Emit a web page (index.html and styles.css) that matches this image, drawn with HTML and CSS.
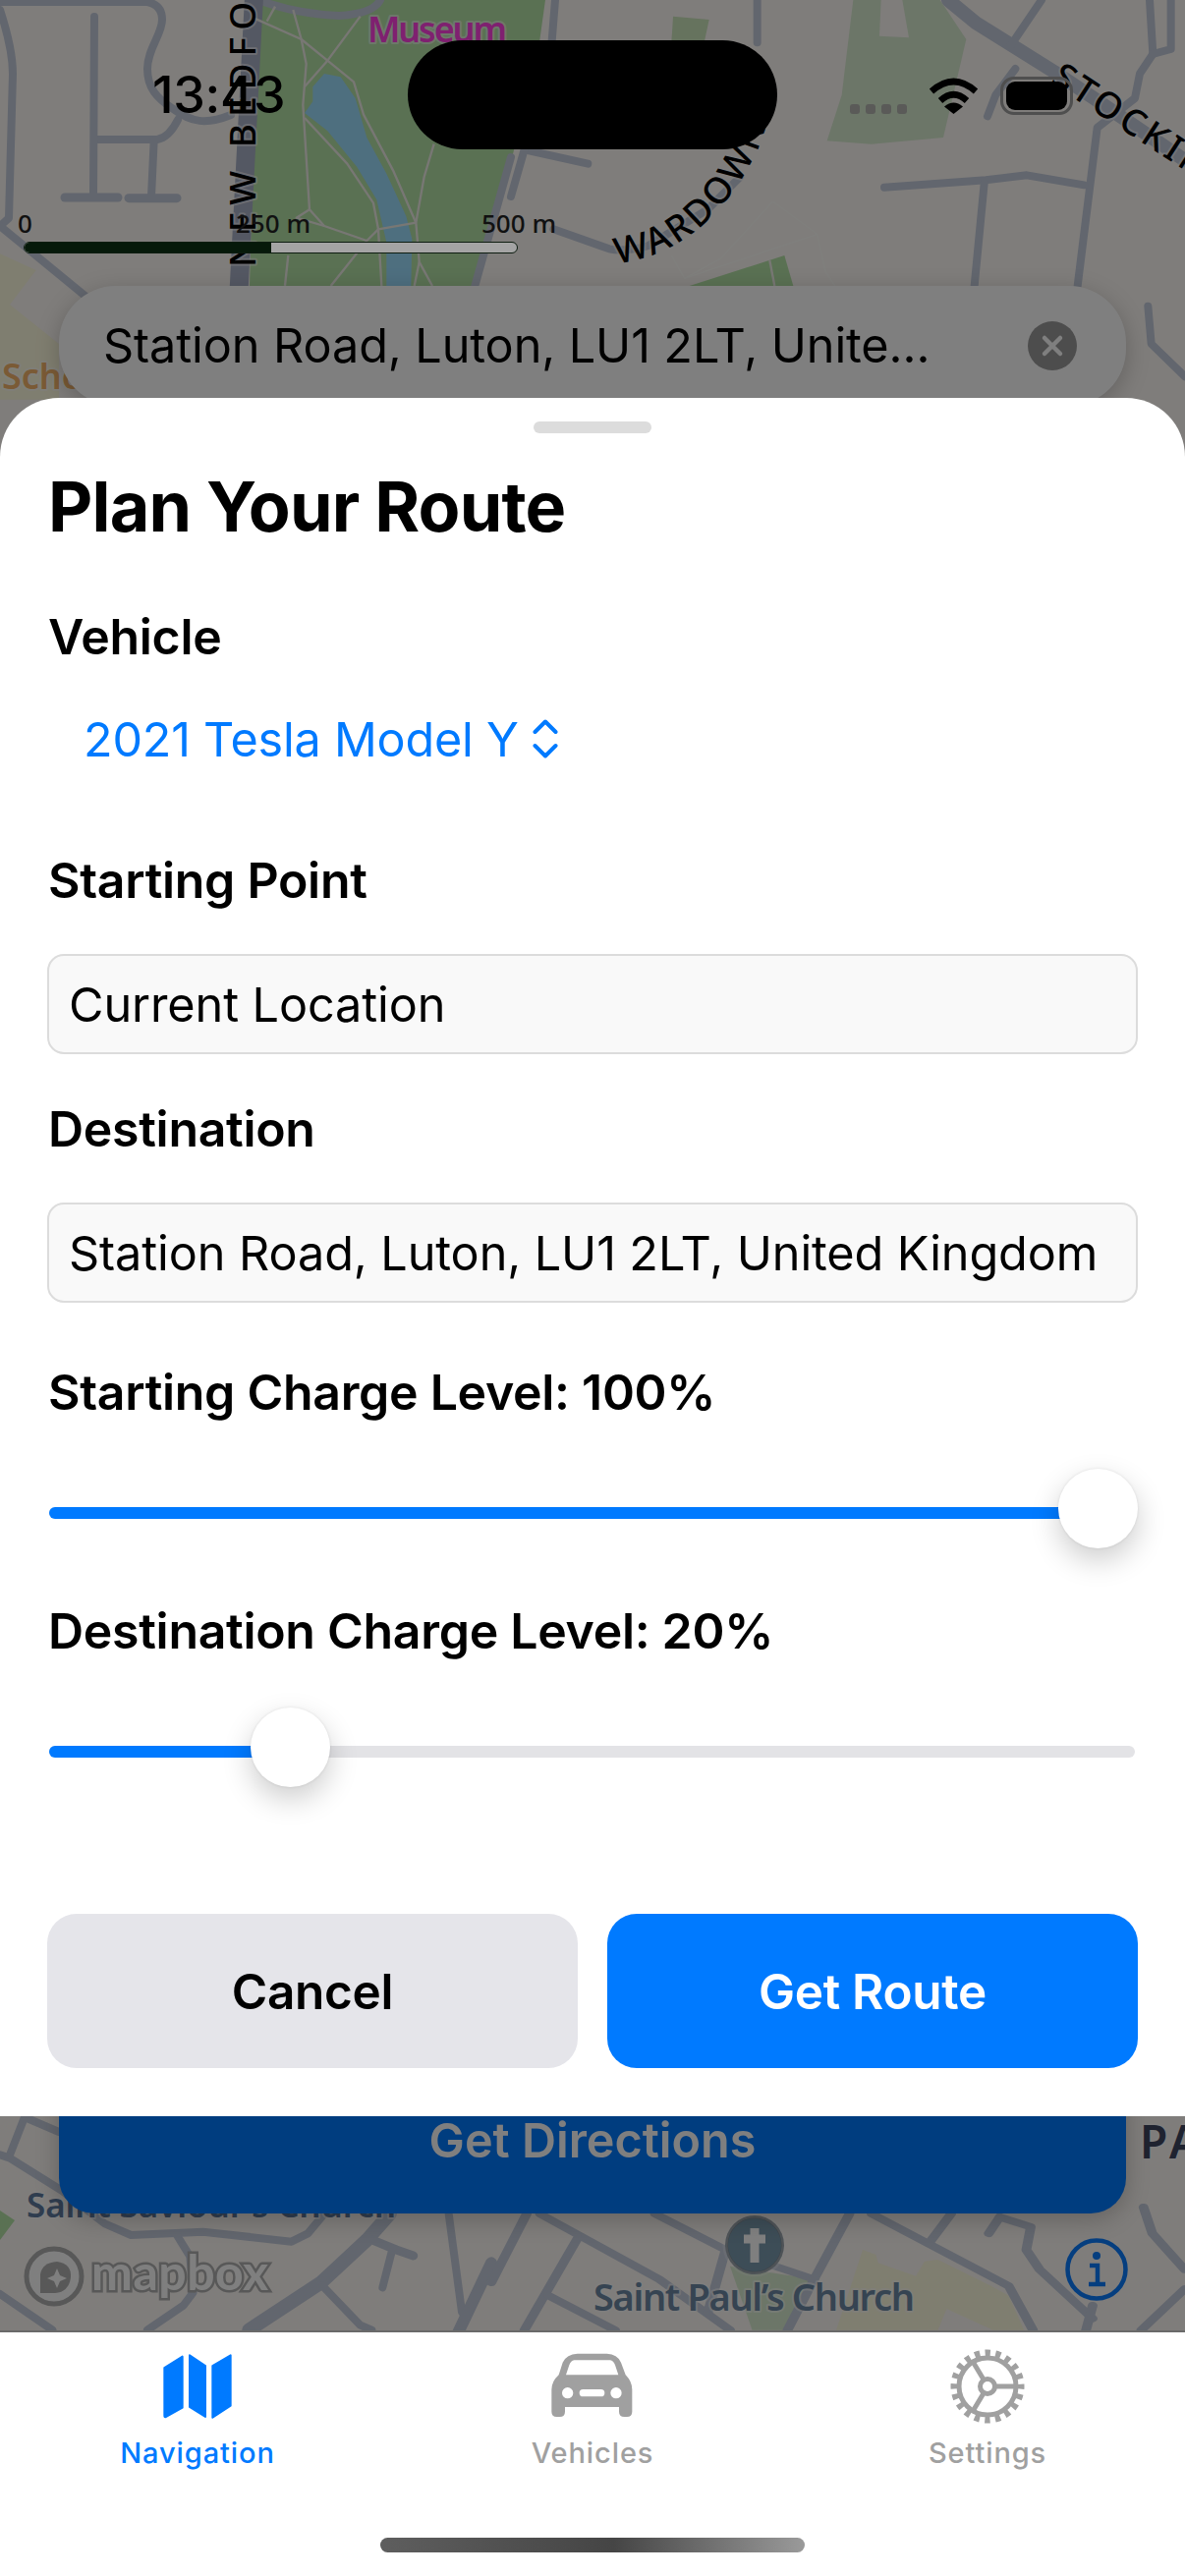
FILE: index.html
```html
<!DOCTYPE html>
<html lang="en">
<head>
<meta charset="utf-8">
<title>Plan Your Route</title>
<link rel="stylesheet" href="styles.css">
</head>
<body>
<div class="screen">
  <div class="map-area">
    <svg class="map" viewBox="0 0 1206 2372" width="1206" height="2372" xmlns="http://www.w3.org/2000/svg">
      <rect width="1206" height="2372" fill="#fefaf6"/>
      <!-- top left: zoom-space coordinates -->
      <g transform="scale(.33333)">
        <polygon points="0,775 110,825 30,930 180,1050 180,1220 0,1220" fill="#fffce0"/>
        <polygon points="786,0 1665,0 1644,150 1560,495 1440,873 762,873" fill="#b4e2a6"/>
        <g class="road" stroke-width="24">
          <path d="M0 6H450Q495 15 495 60C495 105 450 150 450 210C450 270 480 300 525 330C585 375 630 381 705 351"/>
          <path d="M543 366Q516 420 480 426H290"/>
          <path d="M288 51L285 600"/>
          <path d="M470 430L462 600"/>
          <path d="M198 603H360" stroke-width="27"/>
          <path d="M393 605H540" stroke-width="27"/>
          <path d="M0 30Q39 150 39 225L27 666L0 690"/>
          <path d="M0 690L280 920"/>
          <path d="M790 0Q900 42 1035 48Q1140 42 1161 0"/>
          <path d="M1450 873L1560 480"/>
        </g>
        <path d="M730 873L775 0" class="road" stroke="#a8b0c6" stroke-width="57"/>
        <polygon points="930,345 955,310 955,265 990,225 1040,235 1085,300 1120,420 1180,530 1240,660 1258,730 1255,873 1180,873 1180,740 1150,610 1090,510 1000,400" fill="#9cdeff"/>
        <g class="path-line">
          <path d="M775 55L920 120L1000 185L1080 250L1110 350L1200 520L1270 680L1280 800L1320 873"/>
          <path d="M895 30L920 120L935 195L925 320L945 640L990 690L1120 735"/>
          <path d="M1100 50L1000 185L930 265"/>
          <path d="M930 360L1060 500L1140 620L1155 700L1165 873"/>
          <path d="M945 640L905 665L990 690"/>
          <path d="M1155 700L1270 680"/>
          <path d="M1155 700L1120 735L1010 873"/>
          <path d="M880 780L870 873"/>
          <path d="M1325 440L1295 540L1270 680"/>
          <path d="M1280 800L1265 873"/>
          <path d="M840 20L815 65"/>
        </g>
      </g>
      <!-- top centre -->
      <g transform="translate(520 0) scale(.33333)">
        <polygon points="1045,0 1310,0 1390,120 1320,420 1100,440 965,430 1010,290" fill="#d8ecd0"/>
        <polygon points="1130,0 1195,0 1215,115 1125,110" fill="#fefaf6"/>
        <polygon points="495,50 605,60 590,130 490,130" fill="#cce6bc"/>
        <polygon points="545,873 835,780 862,873" fill="#b4e2a6"/>
        <path d="M790 795L805 873" class="path-line"/>
        <g class="faint-line">
          <path d="M800 615L935 715L960 830L990 873"/>
          <path d="M935 715L530 850"/>
          <path d="M800 615L640 790L530 850L490 780"/>
        </g>
        <g class="road" stroke-width="24">
          <path d="M130 700L300 760Q350 770 420 750L600 640L700 540"/>
          <path d="M55 460L235 500"/>
          <path d="M40 460L0 600"/>
          <path d="M752 0V130"/>
          <path d="M135 0L125 125"/>
        </g>
      </g>
      <!-- top right -->
      <g transform="translate(900 0) scale(.33333)">
        <g class="road" stroke-width="24">
          <path d="M195 0L280 70L520 220L640 300L918 490" stroke-width="42"/>
          <path d="M480 0L385 140"/>
          <path d="M400 210L340 290L315 355"/>
          <path d="M810 0L820 165L780 225L765 300L650 390L590 873"/>
          <path d="M875 0V150L820 165"/>
          <path d="M0 572L310 550L435 535L610 565"/>
          <path d="M305 560L275 873"/>
          <path d="M805 935L815 1050L918 1150"/>
        </g>
      </g>
      <text class="label road-name" transform="translate(260 272) rotate(-90)" letter-spacing="7">NEW BEDFORD</text>
      <text class="label road-name" transform="translate(1068 84) rotate(33)" font-size="30" letter-spacing="4">STOCKING</text>
      <path id="wardown" d="M628 268C680 262 735 230 772 150L790 100" fill="none"/>
      <text class="label road-name" font-size="29" letter-spacing="3"><textPath href="#wardown">WARDOWN</textPath></text>
      <text class="label" x="374" y="43" font-size="36" fill="#ff40e0" textLength="142">Museum</text>
      <text class="label" x="2" y="396" font-size="36" fill="#f4b46a">School</text>

      <!-- bottom left -->
      <g transform="translate(0 2150) scale(.33333)">
        <polygon points="0,300 45,330 0,390" fill="#b4e2a6"/>
        <g class="road" stroke-width="24">
          <path d="M30 130L75 15L180 60"/>
          <path d="M0 130L30 140L190 240L320 340L400 375L620 365L890 395L940 370L990 310"/>
          <path d="M540 375L580 440L590 550L560 590L450 665"/>
          <path d="M0 555L160 665"/>
          <path d="M760 665L980 520L1120 390L1190 310" stroke-width="42"/>
          <path d="M1125 385L1210 420L1262 438" stroke-width="27"/>
          <path d="M1195 430L1168 535" stroke-width="24"/>
          <path d="M985 530L1100 650L1135 665"/>
          <path d="M1370 310L1410 610L1425 625"/>
          <path d="M1400 670L1500 460" stroke-width="36"/>
        </g>
      </g>
      <text class="label" x="27" y="2257" font-size="35" fill="#5e7a9e" textLength="376">Saint Saviour’s Church</text>
      <!-- bottom right -->
      <g transform="translate(500 2150) scale(.45 .33333)">
        <polygon points="540,470 730,510 680,665 590,665" fill="#d8ecd0"/>
        <polygon points="840,420 870,435 875,460 960,500 980,455 1010,450 1130,530 1170,560 1205,665 780,665" fill="#fffce0"/>
        <polygon points="1030,600 1135,665 1010,665" fill="#fefaf6"/>
        <g class="road" stroke-width="22">
          <path d="M80 310L0 520"/>
          <path d="M110 310L380 510L540 665"/>
          <path d="M195 385L75 665"/>
          <path d="M130 560L280 665"/>
          <path d="M370 310L530 420L730 510"/>
          <path d="M810 310L730 510L670 665"/>
          <path d="M530 420L490 610"/>
          <path d="M860 310L1170 530L1225 665"/>
          <path d="M1040 310L990 400"/>
          <path d="M1150 320L1220 350L1210 420L1240 480L1360 630"/>
          <path d="M1150 320L1125 370"/>
          <path d="M1475 290L1495 370L1568 480"/>
          <path d="M1568 540L1470 665"/>
          <path d="M1360 590L1345 665"/>
        </g>
      </g>
      <text class="label" x="1160" y="2197" font-size="46" fill="#3e4660" letter-spacing="4">PA</text>
      <circle cx="768" cy="2285" r="30" fill="#7c8a94" stroke="#fff" stroke-opacity=".25" stroke-width="5"/>
      <circle cx="768" cy="2285" r="27" fill="#7a9aae"/>
      <path d="M768 2268V2303M757 2279H779" stroke="#ffffff" stroke-width="9"/>
      <text class="label" x="604" y="2352" font-size="38" fill="#6c88a4" textLength="327">Saint Paul’s Church</text>
    </svg>

    <div class="search-bar">
      <span class="search-text">Station Road, Luton, LU1 2LT, Unite...</span>
      <span class="search-clear">
        <svg viewBox="0 0 50 50" width="50" height="50"><path d="M17 17L33 33M33 17L17 33" stroke="#fff" stroke-width="4.5" stroke-linecap="round"/></svg>
      </span>
    </div>
    <div class="directions-btn">Get Directions</div>

    <div class="mapbox-logo">
      <svg viewBox="0 0 62 64" width="62" height="64"><circle cx="31" cy="32" r="28" fill="#fff" stroke="#b0b0b0" stroke-width="5"/><path d="M17 49V30Q19 18 34 17Q49 19 48 33Q46 48 32 49Z" fill="#b0b0b0"/><path d="M34 24L37 31L44 34L37 37L34 44L31 37L24 34L31 31Z" fill="#fff"/></svg>
      <span class="mapbox-word">mapbox</span>
    </div>
    <svg class="info-btn" viewBox="0 0 66 66" width="66" height="66"><circle cx="33" cy="33" r="29.5" fill="none" stroke="#0a7cff" stroke-width="4.5"/><circle cx="33" cy="19" r="4" fill="#0a7cff"/><path d="M26 29H34V48M25 48H42" fill="none" stroke="#0a7cff" stroke-width="4.5"/></svg>

    <div class="dim"></div>

    <div class="status-bar">
      <span class="time">13:43</span>
      <div class="island"></div>
      <div class="status-dots"><i></i><i></i><i></i><i></i></div>
      <svg class="wifi" viewBox="0 0 51 37" width="51" height="37"><path d="M3 14Q25.500 -6 48 14" fill="none" stroke="#000" stroke-width="6.500"/><path d="M12 23.500Q25.500 11 39 23.500" fill="none" stroke="#000" stroke-width="6.500"/><path d="M25.500 37L16 29.500Q25.500 21.500 35 29.500Z"/></svg>
      <div class="battery"><div class="battery-level"></div></div>
    </div>

    <div class="scale">
      <div class="scale-labels"><span>0</span><span>250 m</span><span>500 m</span></div>
      <div class="scale-bar"><div class="scale-fill"></div></div>
    </div>

    <section class="sheet">
      <div class="grabber"></div>
      <h1 class="sheet-title">Plan Your Route</h1>
      <h2 class="field-label vehicle-label">Vehicle</h2>
      <div class="picker">
        <span>2021 Tesla Model Y</span>
        <svg viewBox="0 0 26 40" width="26" height="40"><path d="M2.500 13L13 2.500L23.500 13M2.500 27L13 37.500L23.500 27" fill="none" stroke="#007aff" stroke-width="4" stroke-linecap="round" stroke-linejoin="round"/></svg>
      </div>
      <h2 class="field-label start-label">Starting Point</h2>
      <div class="text-input">Current Location</div>
      <h2 class="field-label dest-label">Destination</h2>
      <div class="text-input">Station Road, Luton, LU1 2LT, United Kingdom</div>
      <h2 class="field-label charge-start">Starting Charge Level: 100%</h2>
      <div class="slider">
        <div class="slider-fill" style="width:1066px"></div>
        <div class="slider-thumb" style="left:1027px"></div>
      </div>
      <h2 class="field-label charge-dest">Destination Charge Level: 20%</h2>
      <div class="slider">
        <div class="slider-fill" style="width:245px"></div>
        <div class="slider-thumb" style="left:205px"></div>
      </div>
      <div class="actions">
        <button class="btn btn-cancel">Cancel</button>
        <button class="btn btn-primary">Get Route</button>
      </div>
    </section>
  </div>

  <nav class="tabbar">
    <div class="tab active">
      <div class="tab-icon"><svg viewBox="0 0 210 198" width="70" height="66"><path d="M4 42L59 8V164L8 192Q4 194 4 188ZM81 4L129 36V192L81 162ZM151 36L206 4V158L151 194Z" fill="#007aff" stroke="#007aff" stroke-width="6" stroke-linejoin="round"/></svg></div>
      <span>Navigation</span>
    </div>
    <div class="tab">
      <div class="tab-icon"><svg viewBox="0 0 345 270" width="115" height="90"><path fill-rule="evenodd" fill="#a0a0a0" d="M125 35H215Q247 36 258 62L272 100Q292 120 292 145V212Q292 228 276 228H268Q252 228 252 212V198H87V212Q87 228 71 228H62Q46 228 46 212V145Q46 120 68 100L80 62Q92 36 125 35ZM115 55Q105 56 100 70L90 100H250L240 70Q235 56 225 55ZM95 138A17 17 0 1 0 95 172A17 17 0 1 0 95 138ZM243 138A17 17 0 1 0 243 172A17 17 0 1 0 243 138ZM142 144Q131 144 131 155Q131 166 142 166H197Q208 166 208 155Q208 144 197 144Z"/></svg></div>
      <span>Vehicles</span>
    </div>
    <div class="tab">
      <div class="tab-icon"><svg viewBox="0 0 80 80" width="80" height="80"><circle cx="40" cy="40" r="34" fill="none" stroke="#a0a0a0" stroke-width="7" stroke-dasharray="5.340 5.340" stroke-dashoffset="2.670"/><circle cx="40" cy="40" r="29" fill="none" stroke="#a0a0a0" stroke-width="5"/><circle cx="40" cy="40" r="7.500" fill="none" stroke="#a0a0a0" stroke-width="5"/><path d="M48 40H70M36 33L24 13M36 47L24 67" stroke="#a0a0a0" stroke-width="5"/></svg></div>
      <span>Settings</span>
    </div>
  </nav>
  <div class="home-indicator"></div>
</div>
</body>
</html>
```

FILE: styles.css
```css
* { box-sizing: border-box; }
html, body { margin: 0; padding: 0; background: #fff; }
body { font-family: Inter, "Noto Sans", "Liberation Sans", sans-serif; color: #000; }

.screen { position: relative; width: 1206px; height: 2622px; overflow: hidden; display: flex; flex-direction: column; background: #fff; }
.map-area { position: relative; height: 2372px; flex: none; overflow: hidden; }
.map { position: absolute; inset: 0; display: block; }
.dim { position: absolute; inset: 0; background: rgba(0,0,0,.5); }

/* map drawing */
.road path, path.road { fill: none; stroke: #c4ccdc; stroke-linecap: round; stroke-linejoin: round; }
path.road { stroke: #a8b0c6; }
.road { fill: none; }
.path-line, .path-line path { fill: none; stroke: #f0efe8; stroke-width: 7; stroke-linejoin: round; }
.faint-line path { fill: none; stroke: #fffffa; stroke-width: 4; }
.label { font-family: "Noto Sans", Inter, sans-serif; font-weight: 600; paint-order: stroke; stroke: #ffffff; stroke-opacity: .55; stroke-width: 4px; stroke-linejoin: round; }
.road-name { font-size: 37px; font-weight: 500; fill: #000; }

/* floating map controls (under the dim) */
.search-bar { position: absolute; left: 60px; top: 291px; width: 1086px; height: 122px; border-radius: 58px; background: #fff; box-shadow: 0 6px 24px rgba(0,0,0,.22); display: flex; align-items: center; justify-content: space-between; padding: 0 50px 0 45px; }
.search-text { font-size: 48.6px; letter-spacing: -.1px; white-space: nowrap; position: relative; top: -1px; }
.search-clear { width: 50px; height: 50px; border-radius: 50%; background: #9a9a9a; display: flex; }
.directions-btn { position: absolute; left: 60px; top: 2103px; width: 1086px; height: 150px; border-radius: 36px; background: #007aff; color: #fff; font-size: 48.5px; font-weight: 600; text-align: center; padding-top: 46px; box-shadow: 0 6px 24px rgba(0,0,0,.22); }
.mapbox-logo { position: absolute; left: 24px; top: 2285px; display: flex; align-items: center; gap: 7px; }
.mapbox-word { font-family: Lato, Inter, sans-serif; font-weight: 700; font-size: 50px; line-height: 60px; color: #fff; -webkit-text-stroke: 5px #b0b0b0; paint-order: stroke; letter-spacing: .5px; position: relative; top: -5px; }
.info-btn { position: absolute; left: 1083px; top: 2277px; }

/* status bar */
.status-bar { position: absolute; left: 0; top: 0; width: 100%; height: 160px; }
.time { position: absolute; left: 155px; top: 68px; font-size: 52px; line-height: 58px; font-weight: 500; letter-spacing: -.3px; }
.island { position: absolute; left: 415px; top: 41px; width: 376px; height: 111px; border-radius: 56px; background: #000; }
.status-dots { position: absolute; left: 865px; top: 106px; display: flex; gap: 6px; }
.status-dots i { display: block; width: 10px; height: 10px; border-radius: 3px; background: #5a5a58; }
.wifi { position: absolute; left: 945px; top: 79px; }
.battery { position: absolute; left: 1018px; top: 78px; width: 74px; height: 39px; border: 3px solid #4f4f4f; border-radius: 14px; padding: 2px 3px; }
.battery-level { width: 100%; height: 100%; border-radius: 9px; background: #000; }

/* scale */
.scale { position: absolute; left: 24px; top: 213px; width: 503px; }
.scale-labels { height: 33px; font-family: "Noto Sans", Inter, sans-serif; font-size: 26px; line-height: 28px; font-weight: 500; color: #111; display: flex; margin-left: -6px; white-space: nowrap; }
.scale-labels span { flex: none; }
.scale-labels span:nth-child(1) { width: 222px; }
.scale-labels span:nth-child(2) { width: 250px; }
.scale-bar { height: 12px; border: 1px solid #0d1c10; border-radius: 6px; background: #a4a4a4; overflow: hidden; }
.scale-fill { width: 50%; height: 100%; background: #06190a; }

/* sheet */
.sheet { position: absolute; left: 0; right: 0; top: 405px; height: 1749px; background: #fff; border-radius: 60px 60px 0 0; padding: 24px 48px 0; display: flex; flex-direction: column; }
.grabber { width: 120px; height: 12px; border-radius: 6px; background: #dcdcdc; align-self: center; flex: none; }
.sheet-title { margin: 35px 0 0 1px; font-size: 70px; line-height: 80px; font-weight: 700; letter-spacing: -.8px; }
.field-label { margin: 0 0 0 1px; font-size: 50px; line-height: 60px; font-weight: 600; letter-spacing: -.3px; }
.vehicle-label { margin-top: 62px; }
.picker { margin: 44px 0 0 37px; height: 60px; display: flex; align-items: center; gap: 14px; color: #007aff; font-size: 48.500px; letter-spacing: -.2px; }
.start-label { margin-top: 84px; }
.text-input { flex: none; height: 102px; margin-top: 45px; border: 2px solid #dcdcdc; border-radius: 17px; background: #f9f9f9; padding: 0 20px; display: flex; align-items: center; font-size: 48.600px; letter-spacing: -.1px; white-space: nowrap; }
.dest-label { margin-top: 46px; }
.charge-start { margin-top: 61px; }
.slider { position: relative; flex: none; height: 12px; margin: 87px 3px 0 2px; width: 1105px; border-radius: 6px; background: #e3e3e6; }
.slider-fill { height: 100%; border-radius: 6px; background: #007aff; }
.slider-thumb { position: absolute; top: -39px; width: 81px; height: 81px; border-radius: 50%; background: #fff; box-shadow: 0 12px 30px rgba(0,0,0,.2), 0 0 3px rgba(0,0,0,.1); }
.charge-dest { margin-top: 84px; }
.actions { display: flex; gap: 30px; margin-top: 159px; }
.btn { flex: 1; height: 157px; border: 0; border-radius: 30px; font-family: inherit; font-size: 49.500px; font-weight: 600; letter-spacing: -.3px; }
.btn-cancel { background: #e5e5ea; color: #000; }
.btn-primary { background: #007aff; color: #fff; }

/* tab bar */
.tabbar { flex: none; height: 250px; background: #fff; border-top: 2px solid #6a6a6a; display: grid; grid-template-columns: repeat(3, 1fr); padding-top: 10px; align-items: start; }
.tab { display: flex; flex-direction: column; align-items: center; color: #a0a0a0; font-size: 29px; font-weight: 500; }
.tab-icon { height: 90px; display: flex; align-items: center; justify-content: center; }
.tab-icon svg { display: block; }
.tab span { margin-top: 5px; line-height: 36px; letter-spacing: .9px; }
.tab.active { color: #007aff; }
.home-indicator { position: absolute; left: 387px; top: 2583px; width: 432px; height: 15px; border-radius: 8px; background: linear-gradient(90deg, #5e5e5e, #454545 55%, #9a9a9a); }
```
